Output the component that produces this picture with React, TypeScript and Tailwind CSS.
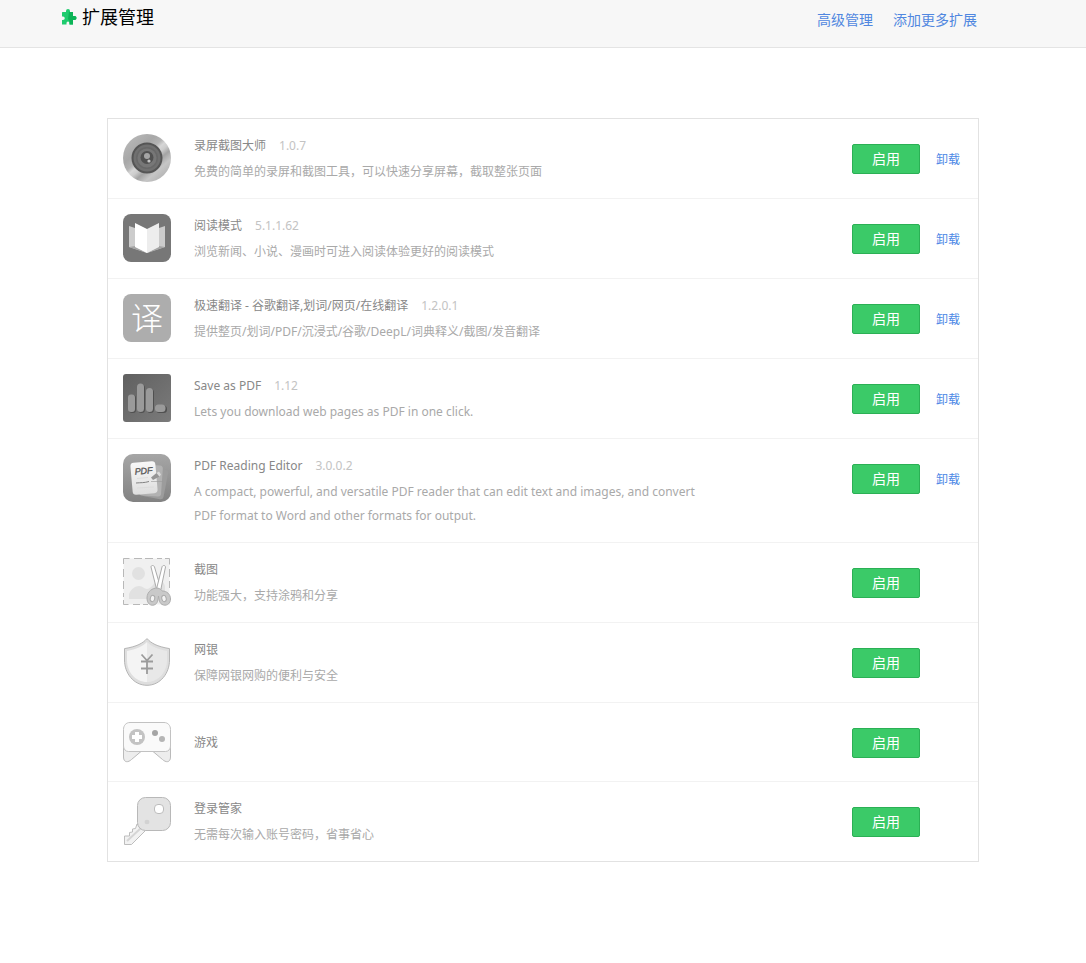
import type { ReactNode } from 'react';

function PuzzleIcon() {
  return (
    <svg viewBox="0 0 16 16" className="h-4 w-4" aria-hidden="true">
      <path
        d="M1.500 3H5V2a2 2 0 0 1 4 0v1h3v4h1.500a2 2 0 0 1 0 4H12v4.500H8.500V14a1.500 1.500 0 0 0-3 0v1.500H1V11h1a1.500 1.500 0 0 0 0-3.500H1V3.500z"
        fill="#1fcb6e"
      />
      <path d="M8 3h4v4h1.500a2 2 0 0 1 0 4H12v4.500H8.500V12L7 10z" fill="#0cb457" />
    </svg>
  );
}

function Icon({ children }: { children: ReactNode }) {
  return (
    <svg viewBox="0 0 48 48" className="h-12 w-12 shrink-0" aria-hidden="true">
      {children}
    </svg>
  );
}

function CameraIcon() {
  return (
    <Icon>
      <defs>
        <linearGradient id="ring" x1="0.15" y1="0.1" x2="0.85" y2="0.9">
          <stop offset="0" stopColor="#b6b6b6" />
          <stop offset="0.28" stopColor="#a8a8a8" />
          <stop offset="0.42" stopColor="#b4b4b4" />
          <stop offset="0.5" stopColor="#d6d6d6" />
          <stop offset="0.58" stopColor="#cccccc" />
          <stop offset="0.68" stopColor="#a4a4a4" />
          <stop offset="0.82" stopColor="#c6c6c6" />
          <stop offset="1" stopColor="#b4b4b4" />
        </linearGradient>
      </defs>
      <circle cx="24" cy="24" r="24" fill="url(#ring)" />
      <circle cx="24" cy="24" r="15.500" fill="#555" />
      <circle cx="24" cy="24" r="13.500" fill="#707070" />
      <circle cx="24" cy="24" r="11" fill="#686868" />
      <circle cx="24" cy="24" r="9.500" fill="#777" />
      <circle cx="24" cy="23.500" r="6.500" fill="#515151" />
      <circle cx="24" cy="22" r="3" fill="#a5a5a5" />
      <circle cx="26" cy="27" r="1.600" fill="#c5c5c5" />
    </Icon>
  );
}

function BookIcon() {
  return (
    <Icon>
      <rect width="48" height="48" rx="8" fill="#777" />
      <path d="M6 12l18 6v21L6 33z" fill="#ccc" />
      <path d="M42 12l-18 6v21l18-6z" fill="#ccc" />
      <path d="M6 33l6-1 12 7z" fill="#a4a4a4" />
      <path d="M42 33l-6-1-12 7z" fill="#a4a4a4" />
      <path d="M12 9l12 6v24l-12-6z" fill="#fff" />
      <path d="M36 9l-12 6v24l12-6z" fill="#ededed" />
    </Icon>
  );
}

function TranslateIcon() {
  return (
    <div
      aria-hidden="true"
      className="flex h-12 w-12 shrink-0 items-center justify-center rounded-lg bg-[#adadad] text-[32px] leading-12 font-light text-white"
    >
      译
    </div>
  );
}

function BarsIcon() {
  return (
    <Icon>
      <defs>
        <linearGradient id="bars" x1="0" y1="0" x2="1" y2="1">
          <stop offset="0" stopColor="#606060" />
          <stop offset="1" stopColor="#7b7b7b" />
        </linearGradient>
      </defs>
      <rect width="48" height="48" rx="3" fill="url(#bars)" />
      <g fill="#505050">
        <rect x="6" y="21" width="7" height="18" rx="3" />
        <rect x="15" y="10.500" width="7" height="28.500" rx="3.500" />
        <rect x="24" y="15" width="7" height="24" rx="3.500" />
        <rect x="33" y="31.500" width="11" height="7.500" rx="3.500" />
      </g>
      <g fill="#9a9a9a">
        <rect x="5" y="20.500" width="7" height="17.500" rx="3" />
        <rect x="14" y="9.500" width="7" height="28.500" rx="3.500" />
        <rect x="23" y="14" width="7" height="24" rx="3.500" />
        <rect x="32" y="30.500" width="10.500" height="7.500" rx="3.500" />
      </g>
    </Icon>
  );
}

function PdfIcon() {
  return (
    <Icon>
      <defs>
        <linearGradient id="pdf" x1="0" y1="0" x2="0" y2="1">
          <stop offset="0" stopColor="#a6a6a6" />
          <stop offset="1" stopColor="#828282" />
        </linearGradient>
        <linearGradient id="sheet" x1="0" y1="0" x2="0" y2="1">
          <stop offset="0" stopColor="#f8f8f8" />
          <stop offset="1" stopColor="#dedede" />
        </linearGradient>
      </defs>
      <rect width="48" height="48" rx="10" fill="url(#pdf)" />
      <rect x="21" y="14" width="22" height="30" rx="3" fill="#9c9c9c" transform="rotate(11 32 29)" />
      <rect x="17" y="11" width="22" height="31" rx="3" fill="#b2b2b2" transform="rotate(4 28 26)" />
      <rect x="8.500" y="8" width="25" height="32" rx="3.500" fill="url(#sheet)" transform="rotate(-5 21 24)" />
      <text
        x="11.500"
        y="20"
        fontSize="9"
        fontStyle="italic"
        fill="#555"
        stroke="#555"
        strokeWidth="0.300"
        transform="rotate(-5 20 16)"
        className="font-['Liberation_Sans',sans-serif]"
      >
        PDF
      </text>
      <path d="M13 29c5-.5 8 0 13-1.500" fill="none" stroke="#777" strokeWidth="0.900" />
      <path d="M14 24.500l11-1M14 34l17-1" stroke="#d8d8d8" strokeWidth="0.700" />
      <path d="M28 27.500h12" stroke="#999" strokeWidth="0.600" />
      <path d="M28 23.500l5.500-4.500 3 3.500-6.500 3.500z" fill="#959595" />
      <path d="M33.500 19l2.500-1.500 2 3-1.500 2z" fill="#dadada" />
    </Icon>
  );
}

function ScreenshotIcon() {
  return (
    <Icon>
      <rect x="0.500" y="0.500" width="46" height="46" fill="#f0f0f0" stroke="#f8f8f8" />
      <path
        d="M0.500 6v-5.500h6M11 .5h8M22 .5h8M34 .5h5M42 .5h4.500v6M46.500 11v8M46.500 23v7M.5 11v8M.5 23v8M.5 35v4M.5 42v4.500h5M10 46.500h7M20 46.500h5"
        fill="none"
        stroke="#b8b8b8"
      />
      <circle cx="15.500" cy="15.500" r="6.500" fill="#e1e1e1" />
      <path d="M6 41v-5c2-5 6-8 10-8 4 0 5 3 8 3 5 0 8-9 12-9 3 0 5 3 6 6v13z" fill="#e1e1e1" />
      <path d="M28 9c0-2 3-2 3.500 0L38 31l-4 2z" fill="#fff" stroke="#aaa" />
      <path d="M42.500 9c0-2-3-2-3.500 0L33.500 31l4 2z" fill="#fff" stroke="#aaa" />
      <path
        d="M34 30c-4 0-10 3-10 10 0 6 4 8 7 7 4-1 4-6 4.500-9 .5 3 .5 8 5 9 4 1 7-2 7-6 0-5-4-8-8-8-1 0-2-3-5.500-3z"
        fill="#c9c9c9"
        stroke="#adadad"
      />
      <ellipse cx="29.500" cy="40.500" rx="2.200" ry="3.200" fill="#f3f3f3" stroke="#aaa" transform="rotate(15 29.500 40.500)" />
      <ellipse cx="41" cy="40.500" rx="2.200" ry="3.200" fill="#f3f3f3" stroke="#aaa" transform="rotate(-15 41 40.500)" />
    </Icon>
  );
}

function ShieldIcon() {
  return (
    <Icon>
      <path
        d="M24 .6c-4 4.500-10 8-22.500 10V22c0 13 9 25.300 22.500 25.300S46.500 35 46.500 22V10.600C34 8.600 28 5.100 24 .6z"
        fill="#dedede"
        stroke="#b5b5b5"
      />
      <path d="M24 4C20 8 13 11.500 4 13v9c0 12 8.500 22 20 22z" fill="#f4f4f4" />
      <path d="M24 4c4 4 11 7.500 20 9v9c0 12-8.500 22-20 22z" fill="#e8e8e8" />
      <path d="M18.500 16.500l5.500 6 5.500-6M24 22v14M18 23.500h12M18 30.500h12" fill="none" stroke="#9b9b9b" strokeWidth="1.800" />
    </Icon>
  );
}

function GamepadIcon() {
  return (
    <Icon>
      <path
        d="M.5 28v11c0 6 5 5.500 8 2.500L18 33.500h12l9.500 8c3 3 8 3.500 8-2.500V28z"
        fill="#ededed"
        stroke="#bababa"
      />
      <path
        d="M7 4.500h34c4 0 6.500 3 6.500 7V28c0 3-2 5.500-5 5.500H5.500c-3 0-5-2.500-5-5.500V11.500c0-4 2.500-7 6.500-7z"
        fill="#fafafa"
        stroke="#c2c2c2"
      />
      <circle cx="14" cy="19" r="8" fill="#c3c3c3" />
      <path d="M12 14h4v3h3v4h-3v3h-4v-3H9v-4h3z" fill="#fff" />
      <circle cx="32" cy="15" r="3" fill="#a5a5a5" />
      <circle cx="39" cy="21" r="3" fill="#b5b5b5" />
    </Icon>
  );
}

function KeyIcon() {
  return (
    <Icon>
      <path
        d="M17 30l-3-3-1.500 4.500-3 .5v3l-3 .5v3.500H1.500v8.500h7L24 32z"
        fill="#f2f2f2"
        stroke="#bdbdbd"
      />
      <path d="M4 44l14-13" stroke="#d5d5d5" strokeWidth="2" />
      <rect x="14.500" y=".5" width="33" height="33" rx="8" fill="#e3e3e3" stroke="#b8b8b8" />
      <rect x="31.500" y="7.500" width="9" height="9" rx="3.500" fill="#fff" stroke="#bcbcbc" />
      <ellipse cx="24" cy="25" rx="2.500" ry="2.200" fill="#d2d2d2" />
    </Icon>
  );
}

interface Extension {
  name: string;
  version?: string;
  description?: string;
  icon: ReactNode;
  removable?: boolean;
}

const extensions: Extension[] = [
  {
    name: '录屏截图大师',
    version: '1.0.7',
    description: '免费的简单的录屏和截图工具，可以快速分享屏幕，截取整张页面',
    icon: <CameraIcon />,
    removable: true,
  },
  {
    name: '阅读模式',
    version: '5.1.1.62',
    description: '浏览新闻、小说、漫画时可进入阅读体验更好的阅读模式',
    icon: <BookIcon />,
    removable: true,
  },
  {
    name: '极速翻译 - 谷歌翻译,划词/网页/在线翻译',
    version: '1.2.0.1',
    description: '提供整页/划词/PDF/沉浸式/谷歌/DeepL/词典释义/截图/发音翻译',
    icon: <TranslateIcon />,
    removable: true,
  },
  {
    name: 'Save as PDF',
    version: '1.12',
    description: 'Lets you download web pages as PDF in one click.',
    icon: <BarsIcon />,
    removable: true,
  },
  {
    name: 'PDF Reading Editor',
    version: '3.0.0.2',
    description:
      'A compact, powerful, and versatile PDF reader that can edit text and images, and convert PDF format to Word and other formats for output.',
    icon: <PdfIcon />,
    removable: true,
  },
  { name: '截图', description: '功能强大，支持涂鸦和分享', icon: <ScreenshotIcon /> },
  { name: '网银', description: '保障网银网购的便利与安全', icon: <ShieldIcon /> },
  { name: '游戏', icon: <GamepadIcon /> },
  { name: '登录管家', description: '无需每次输入账号密码，省事省心', icon: <KeyIcon /> },
];

function ExtensionRow({ item }: { item: Extension }) {
  return (
    <li className="flex min-h-[79px] items-start border-b border-[#f2f2f2] px-[15px] pt-[15px] pb-[14px] last:border-b-0">
      {item.icon}
      <div className={item.description ? 'ml-[23px] min-w-0 flex-1' : 'ml-[23px] min-w-0 flex-1 self-center'}>
        <h2 className="text-xs leading-6 text-[#888]">
          {item.name}
          {item.version && <span className="ml-[13px] text-[#c3c3c3]">{item.version}</span>}
        </h2>
        {item.description && (
          <p className="mt-0.5 max-w-[520px] text-xs leading-6 text-[#a9a9a9]">{item.description}</p>
        )}
      </div>
      <div className="flex w-[111px] shrink-0 items-start gap-4 pt-[10px]">
        <button
          type="button"
          className="h-[30px] w-[68px] cursor-pointer rounded-xs border border-[#2bb055] bg-[#3bca68] text-sm leading-7 text-white"
        >
          启用
        </button>
        {item.removable && (
          <a href="#uninstall" className="text-xs leading-8 text-[#4c88e6]">
            卸载
          </a>
        )}
      </div>
    </li>
  );
}

export default function App() {
  return (
    <div className="min-h-screen bg-white font-['Noto_Sans','Noto_Sans_CJK_SC',sans-serif]">
      <header className="flex h-12 items-start justify-between border-b border-[#e4e4e4] bg-[#f7f7f7] pr-[109px] pl-[61px]">
        <div className="flex items-center gap-[5px] pt-1">
          <PuzzleIcon />
          <h1 className="text-lg leading-[26px] text-black">扩展管理</h1>
        </div>
        <nav className="flex gap-5 pt-2 text-sm leading-6 text-[#5087e0]">
          <a href="#advanced">高级管理</a>
          <a href="#more">添加更多扩展</a>
        </nav>
      </header>
      <main className="mx-auto max-w-[872px] pt-[70px] pb-[100px]">
        <ul className="border border-[#e2e2e2]">
          {extensions.map((item) => (
            <ExtensionRow key={item.name} item={item} />
          ))}
        </ul>
      </main>
    </div>
  );
}
